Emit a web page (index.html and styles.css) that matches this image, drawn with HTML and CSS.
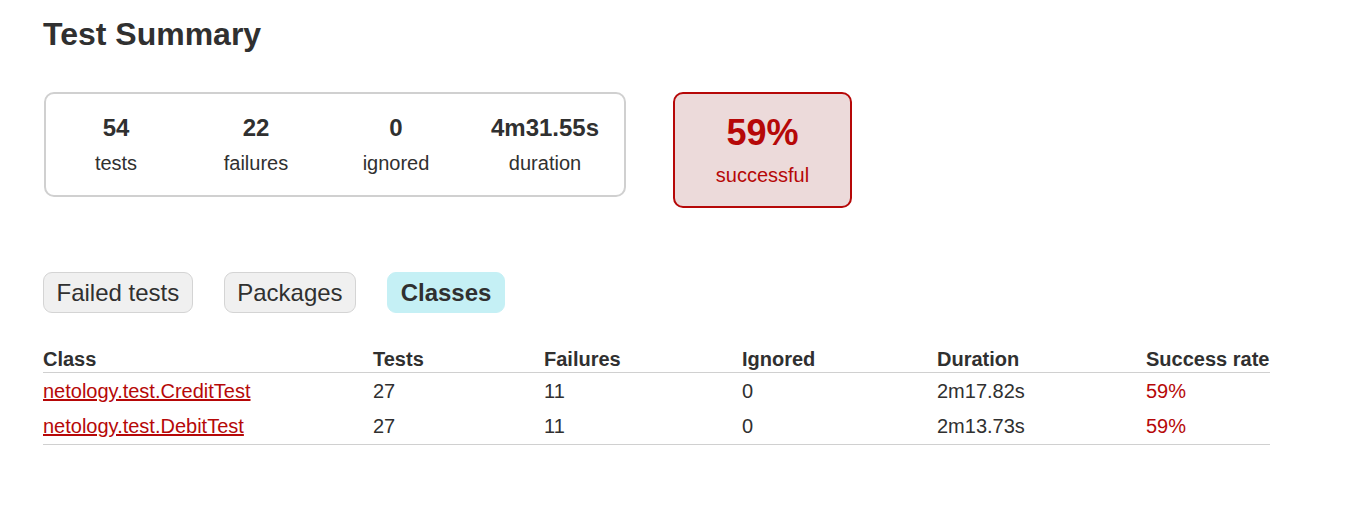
FILE: index.html
```html
<!DOCTYPE html>
<html lang="en">
<head>
<meta charset="utf-8">
<title>Test results - Test Summary</title>
<link rel="stylesheet" href="styles.css">
</head>
<body>
<div class="content">
  <h1 class="title">Test Summary</h1>
  <div class="summary">
    <div class="summary-group">
      <div class="info-box">
        <div class="counter">54</div>
        <p class="label">tests</p>
      </div>
      <div class="info-box">
        <div class="counter">22</div>
        <p class="label">failures</p>
      </div>
      <div class="info-box">
        <div class="counter">0</div>
        <p class="label">ignored</p>
      </div>
      <div class="info-box info-box--wide">
        <div class="counter">4m31.55s</div>
        <p class="label">duration</p>
      </div>
    </div>
    <div class="success-rate">
      <div class="percent">59%</div>
      <p class="label">successful</p>
    </div>
  </div>

  <ul class="tab-links">
    <li class="tab"><a class="tab-link" href="#">Failed tests</a></li>
    <li class="tab"><a class="tab-link" href="#">Packages</a></li>
    <li class="tab selected"><h2 class="tab-title">Classes</h2></li>
  </ul>

  <table class="results">
    <colgroup>
      <col class="col-class">
      <col class="col-tests">
      <col class="col-failures">
      <col class="col-ignored">
      <col class="col-duration">
      <col class="col-rate">
    </colgroup>
    <thead>
      <tr>
        <th>Class</th>
        <th>Tests</th>
        <th>Failures</th>
        <th>Ignored</th>
        <th>Duration</th>
        <th>Success rate</th>
      </tr>
    </thead>
    <tbody>
      <tr>
        <td class="failures"><a href="#">netology.test.CreditTest</a></td>
        <td>27</td>
        <td>11</td>
        <td>0</td>
        <td>2m17.82s</td>
        <td class="failures">59%</td>
      </tr>
      <tr>
        <td class="failures"><a href="#">netology.test.DebitTest</a></td>
        <td>27</td>
        <td>11</td>
        <td>0</td>
        <td>2m13.73s</td>
        <td class="failures">59%</td>
      </tr>
    </tbody>
  </table>
</div>
</body>
</html>
```

FILE: styles.css
```css
html, body {
  margin: 0;
  padding: 0;
  background: #ffffff;
}

body {
  font-family: "Liberation Sans", Arial, sans-serif;
  font-size: 20px;
  color: #303030;
}

.content {
  padding: 16px 0 0 43px;
}

.title {
  margin: 0;
  font-size: 32px;
  line-height: 36px;
  font-weight: bold;
}

/* summary */
.summary {
  display: flex;
  align-items: flex-start;
  margin: 40px 0 0 1px;
}

.summary-group {
  display: flex;
  border: 2px solid #d0d0d0;
  border-radius: 10px;
}

.info-box {
  width: 140px;
  padding: 20px 0;
  text-align: center;
}

.info-box--wide {
  width: 158px;
}

.counter {
  font-size: 24px;
  line-height: 28px;
  font-weight: bold;
  margin-bottom: 10px;
}

.label {
  margin: 0;
  line-height: 23px;
}

.success-rate {
  margin-left: 47px;
  width: 175px;
  padding: 18px 0 19px;
  border: 2px solid #b60808;
  border-radius: 10px;
  background: #ecdada;
  color: #b60808;
  text-align: center;
}

.percent {
  font-size: 36px;
  line-height: 41px;
  font-weight: bold;
  margin-bottom: 11px;
}

/* tabs */
.tab-links {
  display: flex;
  list-style: none;
  margin: 64px 0 0;
  padding: 0;
}

.tab {
  padding: 5.5px 12.5px;
  margin-right: 31px;
  border: 1px solid #d4d4d4;
  border-radius: 9px;
  background: #f0f0f0;
  font-size: 24px;
  line-height: 28px;
}

.tab.selected {
  background: #c5f0f5;
  border-color: #c5f0f5;
}

.tab-link {
  color: #303030;
  text-decoration: none;
}

.tab-title {
  margin: 0;
  font-size: 24px;
  line-height: 28px;
  font-weight: bold;
}

/* table */
.results {
  margin-top: 34px;
  width: 1227px;
  table-layout: fixed;
  border-collapse: collapse;
  border-bottom: 1px solid #d0d0d0;
}

.col-class { width: 330px; }
.col-tests { width: 171px; }
.col-failures { width: 198px; }
.col-ignored { width: 195px; }
.col-duration { width: 209px; }
.col-rate { width: 124px; }

.results th {
  text-align: left;
  font-weight: bold;
  padding: 1px 0;
  line-height: 23px;
  white-space: nowrap;
  border-bottom: 1px solid #d0d0d0;
}

.results td {
  padding: 7px 0 5px;
  line-height: 23px;
  white-space: nowrap;
}

.results tbody tr:last-child td {
  padding-bottom: 6px;
}

.failures,
.failures a {
  color: #b60808;
}
```
